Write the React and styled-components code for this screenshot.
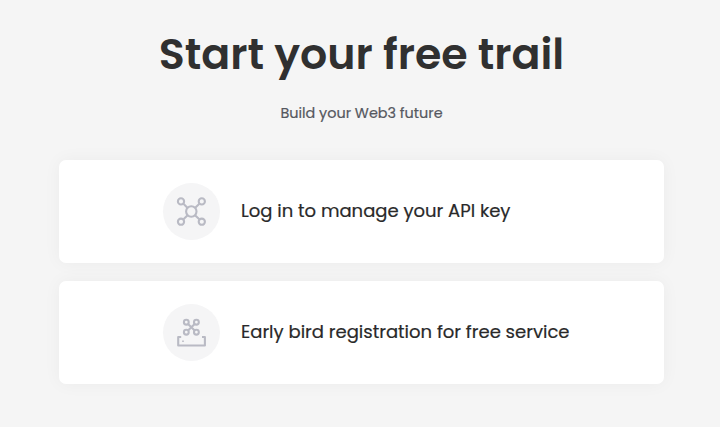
import React from "react";
import styled, { createGlobalStyle } from "styled-components";

const GlobalStyle = createGlobalStyle`
  * { box-sizing: border-box; }
  body {
    margin: 0;
    background: #f5f5f5;
    font-family: Poppins, Inter, sans-serif;
    font-feature-settings: "cv11" 1;
  }
`;

const Page = styled.main`
  height: 427px;
  overflow: hidden;
  padding: 21px 56px 0 59px;
  display: flex;
  flex-direction: column;
`;

const Title = styled.h1`
  margin: 0;
  height: 66px;
  font-size: 42.7px;
  line-height: 66px;
  font-weight: 600;
  color: #303030;
  text-align: center;
  white-space: nowrap;
`;

const Subtitle = styled.p`
  margin: 15px 0 0;
  height: 22px;
  font-size: 14.4px;
  line-height: 22px;
  color: #55585f;
  -webkit-text-stroke: 0.2px currentColor;
  text-align: center;
  white-space: nowrap;
`;

const Cards = styled.section`
  margin-top: 36px;
  display: flex;
  flex-direction: column;
  gap: 18px;
`;

const Card = styled.article`
  height: 103px;
  padding: 0 0 1px 104px;
  display: flex;
  align-items: center;
  gap: 21px;
  border-radius: 7px;
  background: #fff;
  box-shadow: 0 0 18px rgba(0, 0, 0, 0.045);
`;

const IconDisc = styled.span`
  width: 57px;
  height: 57px;
  flex: none;
  border-radius: 50%;
  background: #f5f5f6;
  svg {
    display: block;
    fill: none;
    stroke: #b9bac4;
    stroke-width: 2.1;
  }
`;

const Label = styled.span`
  font-size: 18px;
  line-height: 28px;
  color: #292929;
  -webkit-text-stroke: 0.2px currentColor;
  white-space: nowrap;
`;

const NetworkIcon = () => (
  <svg width="57" height="57" viewBox="0 0 57 57">
    <circle cx="28.3" cy="28.5" r="5.2" />
    <circle cx="18" cy="18.4" r="3.1" />
    <circle cx="38.8" cy="18.4" r="3.1" />
    <circle cx="18" cy="38.7" r="3.1" />
    <circle cx="38.8" cy="38.7" r="3.1" />
    <path d="M20.2 20.6l4.4 4.3M36.6 20.6l-4.6 4.3M20.2 36.5l4.4-4.3M36.6 36.5l-4.6-4.3" />
  </svg>
);

const DriveIcon = () => (
  <svg width="57" height="57" viewBox="0 0 57 57">
    <circle cx="23.3" cy="18.2" r="2.4" />
    <circle cx="33.4" cy="18.2" r="2.4" />
    <circle cx="23.3" cy="28.2" r="2.4" />
    <circle cx="33.4" cy="28.2" r="2.4" />
    <path d="M25 19.9l6.7 6.6M31.7 19.9l-6.7 6.6" />
    <path d="M18.2 33H15.2V41.5H41.9V33H39" strokeLinejoin="round" />
    <path d="M19.2 37.2h1.6" strokeWidth="1.4" />
  </svg>
);

export default function App() {
  return (
    <>
      <GlobalStyle />
      <Page>
        <Title>Start your free trail</Title>
        <Subtitle>Build your Web3 future</Subtitle>
        <Cards>
          <Card>
            <IconDisc><NetworkIcon /></IconDisc>
            <Label>Log in to manage your API key</Label>
          </Card>
          <Card>
            <IconDisc><DriveIcon /></IconDisc>
            <Label>Early bird registration for free service</Label>
          </Card>
        </Cards>
      </Page>
    </>
  );
}
